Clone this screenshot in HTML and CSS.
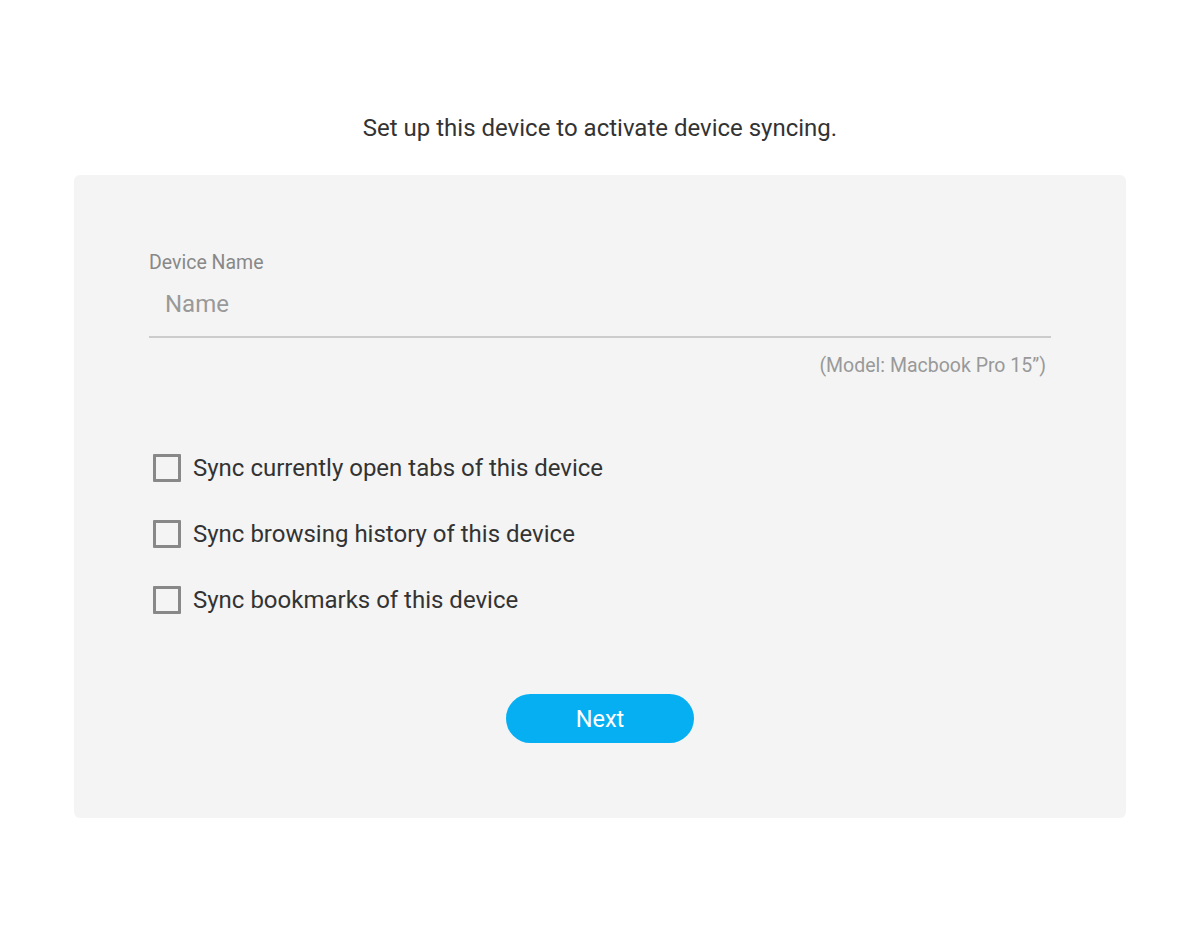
FILE: index.html
```html
<!DOCTYPE html>
<html lang="en">

<head>
    <meta charset="UTF-8">
    <meta name="viewport" content="width=device-width, initial-scale=1.0">
    <title>Device Sync Setup</title>
    <link rel="stylesheet" href="styles.css">
</head>

<body>
    <h2 class="intro">Set up this device to activate device syncing.</h2>

    <form id="syncForm" class="sync-card">
        <div class="field">
            <label for="deviceName" class="field-label">Device Name</label>
            <input type="text" id="deviceName" name="deviceName" placeholder="Name">
            <div class="model-hint">(Model: Macbook Pro 15”)</div>
        </div>

        <div class="options">
            <label class="option"><input type="checkbox" name="tabs"><span class="box"></span>Sync currently open tabs of this device</label>
            <label class="option"><input type="checkbox" name="history"><span class="box"></span>Sync browsing history of this device</label>
            <label class="option"><input type="checkbox" name="bookmarks"><span class="box"></span>Sync bookmarks of this device</label>
        </div>

        <div class="actions">
            <button type="submit" class="next-button">Next</button>
        </div>
    </form>
</body>

</html>
```

FILE: styles.css
```css
body {
    margin: 0;
    font-family: Roboto, "Liberation Sans", sans-serif;
    background-color: #fff;
    color: #333;
}

.intro {
    margin: 114px 0 0;
    text-align: center;
    font-size: 24px;
    font-weight: 400;
    line-height: 28px;
    color: #333;
}

.sync-card {
    margin: 33px 74px 0;
    padding: 75px 75px 75px;
    background-color: #f4f4f4;
    border-radius: 6px;
}

.field {
    display: flex;
    flex-direction: column;
}

.field-label {
    font-size: 19.5px;
    line-height: 26px;
    color: #888;
}

.field input[type="text"] {
    margin: 0;
    padding: 14px 16px 18px;
    border: none;
    border-bottom: 2px solid #ccc;
    background: transparent;
    font-family: inherit;
    font-size: 24px;
    line-height: 28px;
    color: #333;
    outline: none;
}

.field input::placeholder {
    color: #999;
}

.model-hint {
    align-self: flex-end;
    margin-top: 15px;
    margin-right: 5px;
    font-size: 19.5px;
    line-height: 26px;
    color: #999;
}

.options {
    margin-top: 74px;
    display: flex;
    flex-direction: column;
    gap: 36px;
}

.option {
    display: flex;
    align-items: center;
    gap: 12px;
    padding-left: 4px;
    font-size: 24px;
    line-height: 30px;
    color: #333;
    cursor: pointer;
}

.option input {
    display: none;
}

.option .box {
    width: 22px;
    height: 22px;
    border: 3px solid #888;
    border-radius: 1px;
    flex-shrink: 0;
}

.option input:checked + .box {
    background-color: #03aef0;
    border-color: #03aef0;
}

.actions {
    margin-top: 79px;
    display: flex;
    justify-content: center;
}

.next-button {
    width: 188px;
    height: 49px;
    border: none;
    border-radius: 25px;
    background-color: #06aff1;
    color: #fff;
    font-family: inherit;
    font-size: 23.5px;
    cursor: pointer;
}

.next-button:hover {
    background-color: #049ed9;
}
```
